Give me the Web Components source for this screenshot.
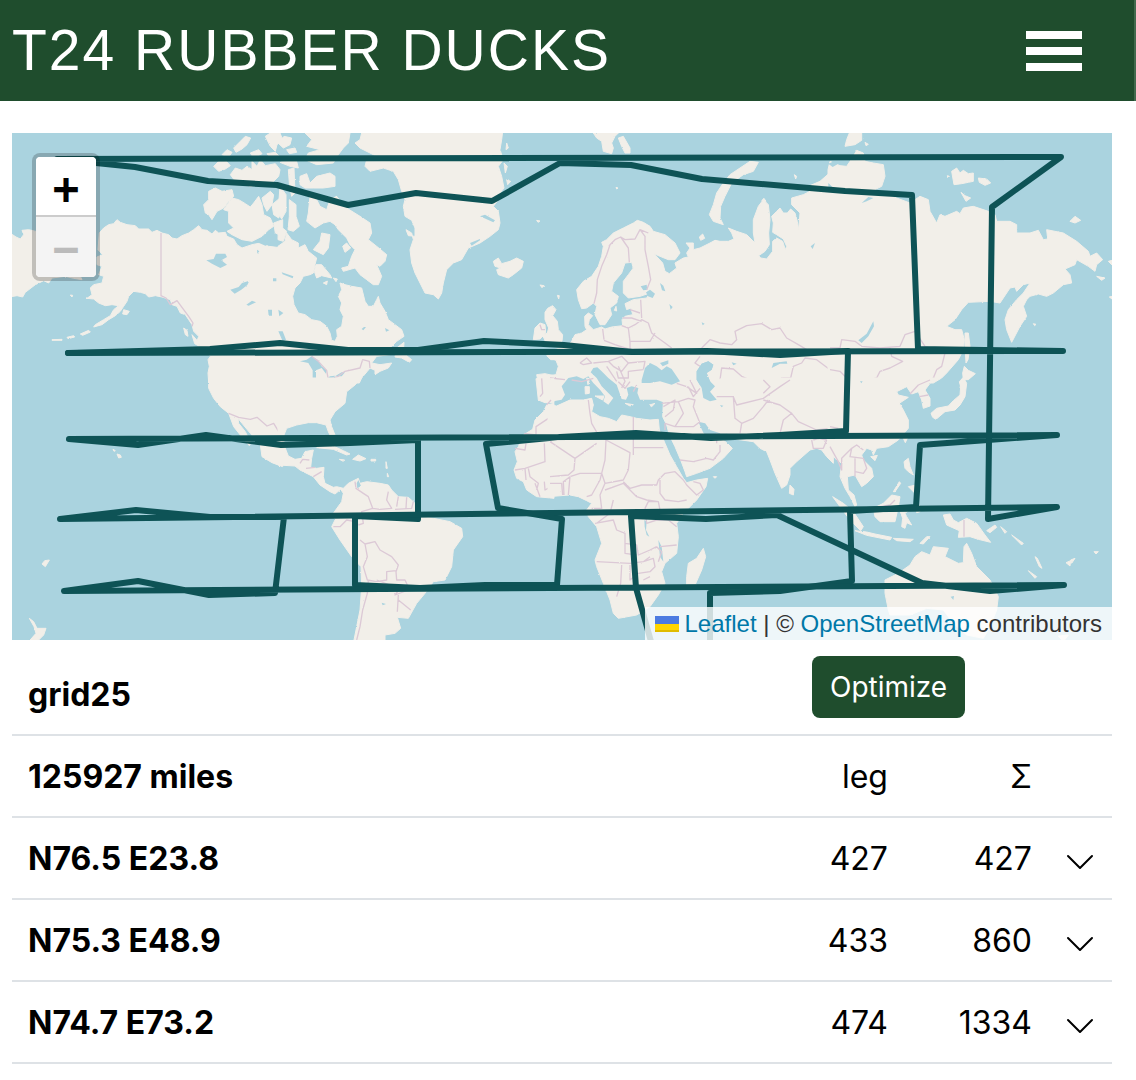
<!DOCTYPE html>
<html lang="en">
<head>
<meta charset="utf-8">
<meta name="viewport" content="width=device-width, initial-scale=1">
<title>T24 Rubber Ducks</title>
<style>
  body { margin: 0; background: #fff; color: #000; font-family: Inter, "Liberation Sans", sans-serif; font-size: 32px; line-height: 48px; }
</style>
</head>
<body>
<duck-app></duck-app>

<template id="app-template">
  <style>
    :host { display: block; }
    main { display: flex; flex-direction: column; padding: 32px 24px 0 12px; }
  </style>
  <site-header>T24 RUBBER DUCKS</site-header>
  <main>
    <route-map></route-map>
    <route-table></route-table>
  </main>
</template>

<template id="header-template">
  <style>
    :host { display: block; }
    header { display: flex; align-items: center; justify-content: space-between; padding: 18px 52px 18px 12px; background: #1f4d2d; border-right: 2px solid #426a4d; color: #fff; }
    a { color: inherit; text-decoration: none; font: 57px/65px "Liberation Sans", sans-serif; letter-spacing: 2px; white-space: nowrap; }
    button { display: flex; flex-direction: column; gap: 8px; width: 56px; padding: 0; border: 0; background: none; cursor: pointer; }
    span { height: 8px; width: 100%; background: #fff; }
  </style>
  <header>
    <a href="#"><slot></slot></a>
    <button type="button" aria-label="Menu"><span></span><span></span><span></span></button>
  </header>
</template>

<template id="zoom-template">
  <style>
    :host { display: block; }
    div { display: flex; flex-direction: column; width: 60px; border: 4px solid rgba(0,0,0,.2); border-radius: 8px; background: #fff; background-clip: padding-box; overflow: hidden; }
    button { box-sizing: border-box; height: 60px; padding: 4px 0 0; border: 0; background: #fff; color: #000; font: bold 44px/56px "DejaVu Sans Mono", monospace; }
    button:first-child { border-bottom: 2px solid #ccc; border-radius: 4px 4px 0 0; }
    button:disabled { background: #f4f4f4; color: #bbb; border-radius: 0 0 4px 4px; }
  </style>
  <div>
    <button type="button" aria-label="Zoom in">+</button>
    <button type="button" aria-label="Zoom out" disabled>−</button>
  </div>
</template>

<template id="map-template">
  <style>
    :host { display: block; position: relative; height: 507px; background: #aad3df; overflow: hidden; }
    .world { display: block; width: 100%; height: 100%; }
    .land { fill: #f2efe9; stroke: #f2efe9; stroke-width: 3; stroke-linejoin: round; }
    .water { fill: #aad3df; }
    .border { fill: none; stroke: #dcc9d6; stroke-width: 4; stroke-linejoin: round; }
    .route { fill: none; stroke: #0e5356; stroke-width: 6; stroke-linecap: round; stroke-linejoin: round; }
    zoom-control { position: absolute; left: 20px; top: 20px; }
    .attribution { position: absolute; right: 0; bottom: 0; display: flex; align-items: center; padding: 0 10px; background: rgba(255,255,255,.8); color: #333; font: 24px/33px "Liberation Sans", sans-serif; white-space: pre; }
    .attribution a { color: #0078a8; text-decoration: none; }
    .attribution svg { display: inline-block; width: 24px; height: 16px; margin-right: 6px; }
  </style>
  <svg class="world" viewBox="0 0 3300 1521" preserveAspectRatio="xMidYMid slice" role="img" aria-label="World map with route">
    <defs>
      <filter id="coast" x="0" y="0" width="100%" height="100%" color-interpolation-filters="sRGB">
        <feTurbulence type="fractalNoise" baseFrequency=".14" numOctaves="2" seed="4" result="n"/>
        <feDisplacementMap in="SourceGraphic" in2="n" scale="5" xChannelSelector="R" yChannelSelector="G"/>
      </filter>
    </defs>
    <g filter="url(#coast)">
    <rect class="water" width="3300" height="1521"/>
    <!-- Alaska and western Canada -->
    <g>
      <path class="land" d="M-9,298 12,312 25,318 35,305 30,292 50,290 75,296 130,320 190,370 230,395 200,420 210,440 185,436 160,430 120,435 110,450 95,443 70,455 40,478 32,492 15,488 -9,492Z
        M262,300 275,285 290,275 305,272 315,260 325,268 345,275 370,278 380,288 410,288 420,298 435,292 450,300 470,305 480,315 495,318 510,308 530,300 545,290 560,278 570,290 585,292 600,303 610,292 620,300 640,298 645,310 665,318 675,335 690,345 720,335 745,330 770,340 812,345 812,750 590,750 588,720 592,700 588,680 595,670 580,650 565,640 555,625 560,610 545,595 540,575 530,560 520,545 505,540 495,520 480,515 475,500 450,492 430,488 410,492 400,482 385,478 365,475 350,490 345,505 335,520 325,535 310,548 290,560 270,575 245,582 250,575 275,560 295,548 305,530 320,518 300,515 280,518 260,510 245,498 225,496 240,485 235,465 245,455 270,450 275,430 260,425 270,400 255,395 255,372 272,365 258,350Z
        M580,240 575,215 590,200 590,175 610,165 630,175 660,170 665,190 650,205 635,225 615,235 600,260 590,245Z
        M650,270 650,235 635,230 660,195 680,200 700,212 715,222 725,210 740,190 750,215 755,245 775,255 785,280 770,290 750,310 720,325 690,320 660,305 645,295 665,285Z
        M605,100 620,85 640,82 655,98 640,108 620,115Z M655,125 670,105 690,112 705,100 720,110 720,85 735,100 745,80 760,98 790,92 804,110 800,130 770,160 740,155 715,160 690,150 670,145Z
        M630,65 645,50 660,58 650,72Z M665,45 685,25 700,10 716,15 705,35 690,48 672,58Z M760,10 775,0 804,0 812,20 795,35 790,55 775,40Z M715,60 740,50 750,62 725,75Z M765,62 790,58 804,72 780,82Z
        M750,195 775,175 785,185 780,215 765,235 755,215Z M780,215 804,195 812,225 800,255 785,245Z M785,270 812,260 812,310 790,300Z
        M335,530 352,535 345,545 332,543Z M205,603 230,592 235,597 212,607Z M165,613 185,608 188,612 168,617Z M120,620 150,619 150,622 120,622Z M175,486 182,487 180,492Z
        M515,585 525,592 528,610 520,605Z M540,605 555,622 562,640 548,632Z"/>
      <path class="water" d="M583,382 605,378 612,362 640,362 645,372 628,382 645,395 625,405 600,392Z M655,470 680,462 690,450 712,443 706,456 688,470 668,482Z M703,515 720,503 732,508 710,518Z M768,530 780,530 780,548 770,548Z M783,436 793,436 793,445 783,445Z M800,600 808,595 822,618 815,622Z M730,325 745,315 765,322 780,330 760,338Z M685,752 697,755 690,762Z M735,350 742,355 736,362Z"/>
      <path class="border" d="M447,300V488L462,495 475,515 495,503 515,530 530,550 543,570 540,580"/>
    </g>
    <!-- Eastern Canada, Greenland, Iceland -->
    <g transform="translate(804 0)">
      <path class="land" d="M-6,340 15,325 20,300 35,320 55,330 55,345 75,335 85,355 110,375 105,395 100,420 90,425 70,430 60,450 45,465 38,490 42,515 55,540 75,545 95,560 120,565 140,580 150,600 155,622 165,625 172,610 170,590 185,580 190,550 180,530 185,510 175,490 185,470 180,450 195,455 215,460 245,465 255,505 265,520 280,520 290,500 295,490 300,510 315,535 325,560 345,575 365,590 372,610 350,625 335,640 330,665 290,670 275,690 300,695 335,690 325,705 300,715 285,725 285,712 270,705 262,715 245,735 238,750 -6,750Z
        M350,645 372,628 370,660 395,680 388,688 365,675 345,672Z
        M90,190 110,200 120,220 140,230 150,200 170,190 185,210 200,225 240,250 270,270 275,300 265,320 290,340 320,365 315,385 300,400 290,395 305,430 295,455 280,455 260,440 240,425 225,405 190,415 185,405 205,400 215,370 225,350 210,335 200,315 175,290 165,275 150,265 130,270 105,285 80,265 85,240Z
        M108,395 125,395 150,425 155,435 125,428 110,435 103,415Z M125,300 150,305 145,345 130,365 100,350 120,325Z M188,340 200,330 212,345 195,358Z M130,450 142,444 140,455Z M160,435 172,438 168,446Z
        M60,130 80,122 90,150 110,130 150,120 165,130 165,160 130,165 100,165 75,165 60,155Z
        M75,0 210,0 205,30 190,45 175,65 160,90 110,95 75,80 85,60 120,50 80,40 95,20Z M-6,30 12,10 35,15 30,35 10,45Z M20,50 45,45 50,58 28,62Z M0,88 20,80 50,85 55,105 30,100Z
        M0,160 18,185 18,235 5,258 -6,240Z M25,110 42,105 45,180 35,190 28,150Z M28,200 48,215 48,250 58,280 40,295 24,290 28,250Z M-5,275 20,295 10,325 -6,320Z
        M245,0 240,20 225,30 240,45 270,60 290,70 260,80 255,100 270,115 310,105 340,115 355,140 365,175 375,200 370,220 375,250 395,262 405,285 405,310 385,308 378,290 395,300 400,320 390,350 395,390 405,420 420,450 435,480 460,485 475,498 485,480 490,450 500,410 520,390 545,380 565,345 600,330 630,310 655,290 660,270 655,235 640,220 655,200 660,180 672,165 665,130 655,100 670,80 660,50 665,20 668,-5Z
        M680,30 685,45 678,50Z M672,90 682,100 676,120Z M680,140 692,145 683,155Z M770,262 780,264 774,268Z M780,456 792,458 786,464Z
        M640,385 655,375 665,392 690,385 710,375 730,385 725,405 700,425 685,435 655,425 650,410 662,405 645,400Z
        M765,585 780,570 795,575 797,600 780,618 760,620Z
        M795,538 803,526 818,518 828,530 818,548 832,565 835,590 848,605 846,625 815,632 782,640 795,622 788,608 802,600 806,585 795,560Z
        M800,668 830,665 830,680 812,680Z M770,725 795,722 822,728 822,750 775,750Z"/>
      <path class="water" d="M60,685 80,680 95,670 115,682 125,700 140,712 138,722 125,705 108,712 108,740 98,745 98,712 85,690Z M130,745 150,730 165,728 160,738Z M165,730 185,718 195,718 185,730Z M-5,595 8,595 18,620 8,625Z M245,588 252,582 258,582 250,592Z M315,585 328,592 318,596Z M-5,530 10,540 -2,550Z M5,418 40,430 38,436 8,424Z M600,250 640,268 645,262 615,245Z M570,330 600,318 600,322 575,338Z"/>
      <path class="border" d="M95,670 115,685 140,712 145,740 175,730 195,715 240,705 248,680 268,685 270,705M780,575 785,590 795,590M825,726 840,740M775,740 790,745 785,785"/>
    </g>
    <!-- Europe and western Russia -->
    <g transform="translate(1614 0)">
      <path class="land" d="M80,470 100,445 125,430 145,400 155,370 160,340 155,328 170,320 190,300 220,285 250,270 262,262 280,268 300,280 310,295 345,305 375,330 390,360 375,380 355,380 330,370 312,362 338,390 345,415 358,422 380,405 375,390 400,375 415,372 410,360 420,345 408,330 430,330 430,350 450,345 480,330 495,322 510,325 535,325 552,318 545,300 535,285 560,295 590,305 615,330 610,300 610,260 625,220 640,200 655,215 660,260 656,300 658,335 645,355 626,368 632,375 650,378 668,355 668,325 680,315 698,325 706,350 710,340 700,318 680,305 668,298 670,270 665,250 680,235 690,225 700,240 712,240 722,228 735,240 742,265 746,290 750,240 725,215 725,195 760,185 780,175 775,160 810,145 850,110 850,835 -6,835 -6,728 18,725 25,700 18,682 -6,672 -6,655 20,648 50,640 65,625 75,605 95,600 110,590 105,580 104,550 115,540 128,548 118,560 115,575 130,590 155,582 165,588 185,582 218,578 216,560 225,550 248,545 243,525 230,530 225,512 250,500 290,495 300,480 270,490 235,495 220,480 220,445 235,425 250,405 245,388 225,390 215,420 190,450 185,475 205,490 200,510 180,525 185,545 165,575 150,575 135,545 140,520 130,510 110,525 95,527 85,500Z
        M625,88 600,85 570,105 540,125 520,150 500,180 490,215 478,245 490,265 520,275 510,255 512,220 525,190 545,150 580,125 610,115Z
        M130,0 140,15 155,25 160,55 185,62 190,45 185,30 195,10 205,0Z M205,15 220,10 240,45 240,60 225,60 215,40Z M448,312 458,303 464,316 452,322Z M635,203 642,196 648,205Z M733,125 740,130 737,138Z M155,562 168,556 166,568Z M193,532 198,520 200,534Z M22,487 28,488 26,498Z M198,163 204,165 200,168Z"/>
      <path class="water" d="M275,741 285,705 300,690 320,700 335,712 350,700 365,708 390,745 365,755 330,745 300,750 275,750Z M330,690 355,682 355,692 338,700Z M440,715 455,692 475,685 490,695 485,710 470,720 480,745 495,760 490,775 500,800 480,805 460,795 455,765 440,740Z M288,478 300,470 315,482 308,495 294,490Z M330,450 340,458 346,475 336,472Z M358,513 368,522 362,530Z M665,705 670,690 710,685 712,692 690,692Z M545,688 560,692 550,697Z M272,460 290,455 292,470 280,472Z M455,568 464,572 458,577Z M782,340 795,330 788,348Z M220,535 232,530 235,542 222,545Z"/>
      <path class="water" d="M35,800 45,785 35,760 55,735 80,730 100,738 115,730 130,750 150,770 165,790 160,805 175,815 190,795 155,760 140,735 122,718 130,705 142,703 155,715 175,735 200,755 215,798 228,800 235,785 230,765 245,760 265,765 262,780 270,800 290,800 320,800 340,808 342,840 335,860 325,858 300,861 260,856 240,851 215,846 200,866 175,856 150,851 125,836 130,816 125,796 100,801 60,801 20,819 -6,816 -6,808Z"/>
      <path class="border" d="M295,300 270,290 255,318 225,320 212,312 195,320 180,335 170,365 155,400 142,440 140,480 132,512M212,312 235,345 238,388M270,290 285,310 285,350 295,400 302,440 290,470M272,500 275,555M240,530 270,540M218,555 245,555 275,565M215,578 235,585 255,575 275,560 295,570 305,600 320,612M158,588 162,620M162,622 195,635 235,648M235,585 240,625 300,625 315,600M240,625 240,648M320,612 345,630 365,645M455,645 480,620 510,630 545,635 560,620 555,595 590,578 635,572 665,590 690,585 710,615 745,635 770,650M90,690 110,675 125,690 100,695 90,690M130,690 175,685 215,670 235,690 215,715 190,700 175,685M235,690 285,685 280,710 235,715 235,735 205,735 200,715M170,700 200,745M205,700 225,745 215,765M0,735 45,740M450,670 435,690 450,700M510,741 515,705 550,708 575,730 610,745 640,760M840,710 800,680 765,675 755,690 730,700 722,735 695,735 680,750 640,750"/>
    </g>
    <!-- Siberia and the Far East -->
    <g transform="translate(2454 0)">
      <path class="land" d="M-6,110 0,85 30,98 50,100 60,85 70,70 80,52 100,60 105,85 130,90 160,95 165,130 155,160 130,172 160,180 200,195 240,210 270,190 295,200 300,235 320,270 330,245 345,250 380,235 390,242 400,225 430,220 475,235 495,245 500,265 540,265 560,275 560,300 600,300 625,292 640,320 653,318 650,290 700,300 740,325 775,355 780,370 800,360 818,380 800,395 795,415 775,400 740,380 735,395 705,408 720,425 725,450 700,455 670,480 650,490 625,483 600,490 590,500 580,520 590,550 570,580 545,628 530,590 525,560 535,530 560,500 580,480 600,450 580,455 560,475 555,462 540,465 510,510 480,505 415,508 395,530 375,560 350,580 375,590 395,590 403,620 400,650 385,680 350,720 335,735 310,750 -6,750Z
        M405,600 415,600 420,640 414,680 408,690 405,640Z M403,700 415,712 436,722 415,740 400,740 398,720Z M395,740 405,745 405,760 390,765Z
        M365,115 380,105 390,120 400,112 415,122 430,120 430,145 415,148 395,152 372,155Z M445,135 470,138 482,150 465,157 448,148Z M393,178 405,188 422,195 408,205Z M60,-5 95,-5 95,22 75,35 45,40 50,20Z M105,28 115,34 108,38Z M720,265 735,250 752,262 735,270Z M352,128 358,130 354,135Z M800,430 825,435 815,442Z M835,385 846,382 846,396Z M838,492 846,490 846,498Z M610,572 618,574 614,578Z"/>
      <path class="water" d="M85,622 110,602 130,565 132,580 115,610 95,630Z M95,210 115,192 130,195 110,205Z M-5,92 12,85 25,92 8,102Z M-5,150 10,165 -5,165Z"/>
      <path class="border" d="M0,645 30,645 35,620 75,625 95,640 150,645 210,640 225,605 255,595 285,640 345,660 335,700 320,710 310,735 275,755 262,770M180,645 185,670 218,685 180,705 150,715 140,735 95,747 50,735 30,715 0,710"/>
    </g>
    <!-- Pacific, Mexico, New Zealand -->
    <g transform="translate(0 741)">
      <path class="land" d="M590,-6 590,25 605,55 625,80 650,100 665,140 685,165 712,197 716,188 700,155 680,130 678,115 690,130 715,160 745,195 750,230 780,248 812,260 812,-6Z M315,222 325,225 328,232 320,234Z M90,552 98,542 112,540 100,560Z M52,715 65,725 75,745 102,745 95,765 75,785 50,785 72,760 66,740Z M303,208 310,212 306,214Z"/>
      <path class="border" d="M650,100 680,112 715,118 735,112 765,138 785,130 800,155"/>
    </g>
    <!-- Central and South America -->
    <g transform="translate(804 741)">
      <path class="land" d="M-6,-6 243,-6 225,15 200,35 195,70 165,95 150,120 155,140 165,165 155,175 145,155 138,135 110,128 85,128 50,135 20,145 12,165 12,195 25,228 45,238 65,235 75,215 100,210 95,235 92,262 110,265 132,262 130,290 135,310 160,322 170,320 190,325 205,310 235,295 240,310 260,305 300,310 325,315 335,330 355,350 385,352 405,370 405,395 425,410 460,415 510,425 545,445 548,470 520,510 515,560 495,600 460,605 435,640 410,670 385,715 352,712 362,745 345,760 315,765 315,790 220,790 230,740 240,690 245,620 243,560 215,530 180,480 155,440 165,420 160,400 185,365 190,340 182,328 165,342 150,335 120,315 100,290 60,270 45,258 -6,255Z
        M110,203 130,196 160,198 190,212 210,222 200,225 160,208Z M218,238 235,225 258,236 240,243Z M273,238 287,238 287,243 273,243Z M178,238 194,240 190,244Z M318,245 322,265 318,265Z M322,280 326,290 322,290Z M768,-4 822,-4 822,68 795,68 775,60Z
        M822,70 800,75 790,95 765,120 758,148 730,165 715,200 705,215 712,245 702,270 710,295 730,305 740,330 770,350 822,355Z"/>
      <path class="water" d="M235,300 243,318 232,325 230,310Z M305,668 318,672 308,676Z"/>
      <path class="border" d="M60,250 68,238 88,240M78,265 105,262M100,290 125,275M225,305 228,325 250,340 265,350 278,385 245,395 250,430 235,435M325,335 320,360 335,385 300,388 278,385M355,350 350,380M380,352 378,385M400,365 395,385 345,388M160,440 180,440 200,420 225,425M240,480 255,492 285,485 300,510 335,530 355,555 348,575 350,600 375,600 382,615M255,492 262,530 250,560 262,600 290,605 320,600 320,575 348,572M265,600 262,640 248,690 240,740 230,780M290,600 330,615 360,625 345,645 385,630M355,645 352,695M355,660 392,690M785,-5 788,40 780,50M800,75 813,60M733,160 768,165 768,140 813,110M705,205 735,210 738,190M705,270 735,265 738,300M735,265 795,245 793,190M745,265 750,290 775,310 770,330M765,310 780,350M793,305 795,330 813,320"/>
    </g>
    <!-- Africa, Arabia and India -->
    <g transform="translate(1614 741)">
      <path class="land" d="M-6,74 20,78 60,60 100,60 125,55 130,75 125,95 150,110 175,115 200,125 215,105 240,110 260,115 300,120 325,118 328,150 345,190 360,225 380,260 400,295 410,308 440,300 473,295 468,320 440,360 400,400 380,430 385,470 380,520 345,550 335,575 345,610 325,645 300,680 260,705 205,715 190,700 180,660 160,610 140,560 135,540 155,490 140,440 115,410 110,390 125,370 110,362 85,350 60,345 -6,350Z
        M338,110 350,135 358,165 375,200 392,240 405,275 410,290 440,280 480,265 520,235 547,205 530,188 512,175 510,165 495,180 475,165 450,132 465,130 480,150 500,160 530,160 560,178 610,185 630,205 650,215 660,240 675,280 695,325 710,315 720,285 720,265 740,245 780,210 800,205 815,210 830,230 850,250 850,-6 520,-6 440,20 342,30Z
        M460,505 467,530 455,570 435,615 410,615 410,590 415,550 440,535Z M720,315 732,328 730,345 718,340Z M105,20 118,20 118,40 106,42Z M110,-6 118,-4 114,14Z M135,48 162,48 158,60Z M225,70 250,74 240,78Z M298,75 315,70 305,80Z M490,290 500,290 495,295Z"/>
      <path class="water" d="M440,-26 455,-49 475,-56 490,-46 485,-31 470,-21 480,4 495,19 480,35 500,59 480,64 460,54 455,24 440,-1Z M445,125 465,130 480,150 510,160 520,180 480,178 460,158Z M283,420 290,425 288,450 298,470 290,465 284,440Z M325,480 335,500 340,545 330,530Z M510,75 520,77 515,82Z"/>
      <path class="border" d="M115,60 120,100 125,130 145,165M250,110 250,225M250,203 340,203M168,180 240,218 235,270 220,300 165,310 155,280 165,240 168,180 145,165M0,185 75,235 72,270 55,285 0,290M75,235 140,190M60,290 90,280 155,280 150,300 125,345 110,350M55,345 60,290 40,305 42,345M0,310 35,310 38,345M165,310 150,345 155,385 125,385M165,330 220,310 260,350 290,360 325,365 330,390M220,305 240,325 275,315 320,315 325,300 345,280 375,275 400,300 410,315 440,345 460,330 450,310 430,305M330,300 330,340 345,360 385,365 410,360M285,385 295,365 325,365M285,385 290,430 320,420 355,420 380,440M135,430 190,420 200,450 225,460 225,490 260,495 265,525 300,510 320,500M190,360 180,400 140,430M140,545 240,550 280,545 300,530M225,490 225,520 260,525M215,555 212,610 200,650M240,555 240,600 265,580 300,575 315,560 310,535 280,545M330,500 380,495M300,590 280,600M320,500 335,515 325,545M345,150 345,130 375,140 400,100 385,65 335,70M385,65 415,55 435,60 430,80 450,130M375,140 430,140 450,125M390,240 430,245 470,235 490,240 510,215 510,195M500,160 500,190M340,80 375,60 370,90 345,110M420,0 440,40 410,20 380,10M415,20 430,50 450,25M500,50 550,50 560,75 640,55 690,20 720,0M550,50 555,115 575,130 570,160M575,130 610,115 640,80 655,60M640,60 690,75 725,100 700,120 690,160M725,100 745,125 800,150 840,145M640,0 660,20 640,40M785,180 790,205 820,205 830,180 805,175 790,180M65,0 95,5 130,-5M205,5 225,25 240,5M260,15 250,35"/>
    </g>
    <!-- East Asia and Oceania -->
    <g transform="translate(2454 741)">
      <path class="land" d="M-6,205 15,235 35,250 30,290 45,325 60,350 75,380 80,375 72,345 55,330 52,290 75,285 95,320 110,310 130,290 125,265 100,240 95,225 110,205 125,210 130,225 140,205 175,200 205,180 235,145 235,120 220,90 208,70 235,52 205,45 200,35 230,20 245,42 265,35 275,60 280,85 300,78 300,55 285,30 312,-6 -6,-6Z
        M303,100 320,85 355,78 370,62 390,45 392,20 388,5 400,-8 410,10 405,50 390,75 375,90 345,95 318,118 308,112Z M220,175 230,160 234,170 226,188Z M122,230 142,226 135,242Z M222,245 235,235 240,260 250,285 235,275 225,265Z M235,320 258,315 268,335 260,345Z M208,305 190,335 195,335 212,310Z
        M130,385 160,370 185,345 210,350 205,380 195,425 150,425 135,410Z M8,350 40,370 70,395 100,440 92,452 60,420 30,380Z M75,452 110,456 135,462 185,472 180,480 110,466Z M190,475 250,478 240,485 200,482Z M210,392 245,385 225,400 230,410 245,435 230,428 225,445 215,440 218,415Z M258,380 268,375 270,395 260,398Z M270,490 290,470 300,470 280,492Z
        M340,405 360,402 370,420 385,428 410,415 440,430 465,465 482,487 445,478 420,470 385,472 388,452 350,435Z M470,452 495,435 500,442 480,458Z M512,440 530,455 525,460Z M545,465 580,490 575,495Z M615,530 622,535 636,565 628,560Z M595,572 620,590 615,595Z M708,548 722,542 720,558Z M722,540 735,535 725,550Z M792,515 805,515 798,522Z
        M165,600 205,580 240,555 255,530 275,515 300,525 310,500 355,505 345,530 385,550 400,548 402,500 410,490 425,520 440,560 480,600 505,650 500,690 480,740 460,775 410,765 370,730 340,690 290,685 240,705 180,705 175,690 165,640Z M685,768 715,765 700,785Z"/>
      <path class="water" d="M362,650 372,648 370,660Z M90,4 98,4 94,10Z"/>
      <path class="border" d="M0,200 25,245 35,270 35,235 65,205 60,230 100,235 110,265 100,280 75,275 75,290M65,205 80,195 100,210M75,275 75,235M402,420V470M150,380 180,375 195,360M240,42 265,15 300,0M268,50 295,45M0,140 25,145"/>
    </g>
    </g>
    <!-- Route in window units, offset by the page margin -->
    <g transform="scale(3) translate(-12 -133)">
      <g class="route">
        <path d="M68,353 210,349 280,343 348,350 418,350 484,341 564,345 632,352 707,351 780,355 848,351 846,431 780,435 711,438 636,433 560,437 486,444 498,508 562,519 557,585 485,585 420,588 355,585 355,516 418,519 418,440 350,443 281,445 206,435 138,445 69,439 1057,435 988,440 920,445 916,507 850,511 852,581 780,591 710,593 710,645"/>
        <path d="M68,353 1063,351 918,349 912,195 845,191 702,179 631,165 560,163 492,201 416,193 348,205 277,185 208,181 135,167 57,159 1061,157 992,207 988,519 1057,507 60,519 136,510 210,517 284,517 275,593 209,595 138,581 64,591 1064,585 990,591 922,583 777,515 706,519 631,516 636,588 652,645"/>
      </g>
    </g>
  </svg>
  <zoom-control></zoom-control>
  <div class="attribution"><svg viewBox="0 0 12 8" aria-hidden="true"><path fill="#4c7be1" d="M0 0h12v4H0z"/><path fill="#ffd500" d="M0 4h12v3H0z"/><path fill="#e0bc00" d="M0 7h12v1H0z"/></svg><a href="#leaflet">Leaflet</a><span> | © </span><a href="#osm">OpenStreetMap</a><span> contributors</span></div>
</template>

<template id="table-template">
  <style>
    :host { display: block; }
    table { width: 100%; border-collapse: collapse; table-layout: fixed; }
    .leg { width: 108px; } .sum { width: 144px; } .more { width: 64px; }
    th, td { box-sizing: border-box; padding: 17px 16px 15px; border-bottom: 2px solid #dee2e6; vertical-align: bottom; text-align: right; font-weight: 400; font-size: 32px; line-height: 48px; }
    th[scope=row] { text-align: left; font-weight: 700; }
    .action { padding: 16px; text-align: left; }
    .action button { display: block; padding: 10px 18px; border: 0; border-radius: 8px; background: #1f4d2d; color: #fff; font: 28px/42px Inter, sans-serif; }
    .toggle { display: block; width: 32px; height: 48px; padding: 10px 0 6px; border: 0; background: none; }
    .toggle svg { display: block; width: 32px; height: 32px; }
  </style>
  <table>
    <colgroup><col><col class="leg"><col class="sum"><col class="more"></colgroup>
    <thead>
      <tr><th scope="row">grid25</th><td class="action" colspan="3"><button type="button">Optimize</button></td></tr>
      <tr><th scope="row">125927 miles</th><th scope="col">leg</th><th scope="col">Σ</th><td></td></tr>
    </thead>
    <tbody></tbody>
  </table>
</template>

<template id="row-template">
  <tr>
    <th scope="row"></th><td></td><td></td>
    <td><button class="toggle" type="button" aria-label="Show details"><svg viewBox="0 0 16 16" aria-hidden="true"><path d="M2 5.5 8 11.5 14 5.5" fill="none" stroke="#000" stroke-linecap="round" stroke-linejoin="round"/></svg></button></td>
  </tr>
</template>

<script>
  const clone = id => document.getElementById(id).content.cloneNode(true);

  class TemplateElement extends HTMLElement {
    constructor() {
      super();
      this.attachShadow({ mode: 'open' }).append(clone(this.constructor.template));
    }
  }
  class SiteHeader extends TemplateElement { static template = 'header-template'; }
  class ZoomControl extends TemplateElement { static template = 'zoom-template'; }
  class RouteMap extends TemplateElement { static template = 'map-template'; }
  class RouteTable extends TemplateElement {
    static template = 'table-template';
    static waypoints = [
      ['N76.5 E23.8', 427, 427],
      ['N75.3 E48.9', 433, 860],
      ['N74.7 E73.2', 474, 1334]
    ];
    connectedCallback() {
      const body = this.shadowRoot.querySelector('tbody');
      body.replaceChildren(...RouteTable.waypoints.map(values => {
        const row = clone('row-template');
        values.forEach((value, i) => { row.querySelector('tr').cells[i].textContent = value; });
        return row;
      }));
    }
  }
  class DuckApp extends TemplateElement { static template = 'app-template'; }

  customElements.define('site-header', SiteHeader);
  customElements.define('zoom-control', ZoomControl);
  customElements.define('route-map', RouteMap);
  customElements.define('route-table', RouteTable);
  customElements.define('duck-app', DuckApp);
</script>
</body>
</html>
